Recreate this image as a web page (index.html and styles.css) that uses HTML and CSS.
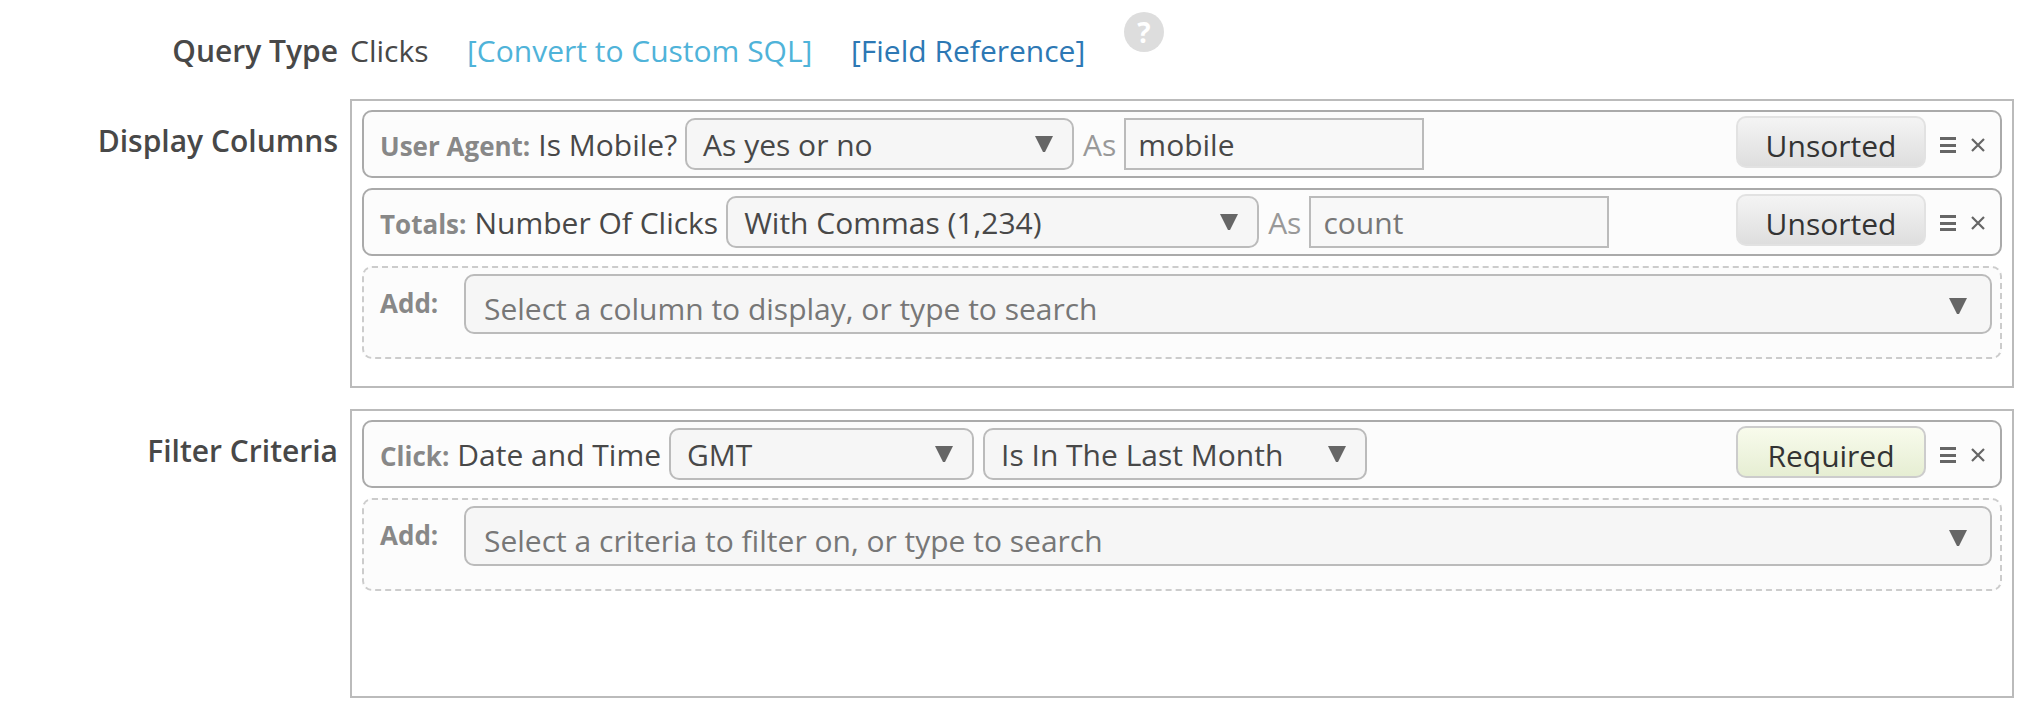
FILE: index.html
```html
<!DOCTYPE html>
<html lang="en">
<head>
<meta charset="utf-8">
<title>Query</title>
<link rel="stylesheet" href="styles.css">
</head>
<body>
<form class="form">
  <div class="field field-type">
    <div class="label">Query Type</div>
    <div class="type-line">
      <span class="type-value">Clicks</span>
      <a class="link link-sql" href="#">[Convert to Custom SQL]</a>
      <a class="link link-ref" href="#">[Field Reference]</a>
      <span class="help">?</span>
    </div>
  </div>
  <div class="field field-panel">
    <div class="label label-panel">Display Columns</div>
    <div class="panel">
      <div class="row">
        <span class="group">User Agent:</span>
        <span class="name">Is Mobile?</span>
        <span class="select select-format-a"><span class="select-text">As yes or no</span><svg class="arrow" viewBox="0 0 18 18"><path d="M0 1h18L10 17H8z"/></svg></span>
        <span class="as">As</span>
        <input class="alias" value="mobile">
        <span class="spacer"></span>
        <button class="sort" type="button">Unsorted</button>
        <svg class="icon-menu" viewBox="0 0 16 16"><path d="M0 0h16v3H0zM0 7h16v3H0zM0 13h16v3H0z"/></svg>
        <svg class="icon-close" viewBox="0 0 14 14"><path d="M1 1l12 12M13 1L1 13"/></svg>
      </div>
      <div class="row">
        <span class="group">Totals:</span>
        <span class="name">Number Of Clicks</span>
        <span class="select select-format-b"><span class="select-text">With Commas (1,234)</span><svg class="arrow" viewBox="0 0 18 18"><path d="M0 1h18L10 17H8z"/></svg></span>
        <span class="as">As</span>
        <input class="alias" placeholder="count">
        <span class="spacer"></span>
        <button class="sort" type="button">Unsorted</button>
        <svg class="icon-menu" viewBox="0 0 16 16"><path d="M0 0h16v3H0zM0 7h16v3H0zM0 13h16v3H0z"/></svg>
        <svg class="icon-close" viewBox="0 0 14 14"><path d="M1 1l12 12M13 1L1 13"/></svg>
      </div>
      <div class="add">
        <span class="add-label">Add:</span>
        <span class="select select-add"><span class="select-text placeholder">Select a column to display, or type to search</span><svg class="arrow" viewBox="0 0 18 18"><path d="M0 1h18L10 17H8z"/></svg></span>
      </div>
    </div>
  </div>
  <div class="field field-panel">
    <div class="label label-panel">Filter Criteria</div>
    <div class="panel">
      <div class="row">
        <span class="group">Click:</span>
        <span class="name">Date and Time</span>
        <span class="select select-zone"><span class="select-text">GMT</span><svg class="arrow" viewBox="0 0 18 18"><path d="M0 1h18L10 17H8z"/></svg></span>
        <span class="select select-range"><span class="select-text">Is In The Last Month</span><svg class="arrow" viewBox="0 0 18 18"><path d="M0 1h18L10 17H8z"/></svg></span>
        <span class="spacer"></span>
        <button class="sort sort-required" type="button">Required</button>
        <svg class="icon-menu" viewBox="0 0 16 16"><path d="M0 0h16v3H0zM0 7h16v3H0zM0 13h16v3H0z"/></svg>
        <svg class="icon-close" viewBox="0 0 14 14"><path d="M1 1l12 12M13 1L1 13"/></svg>
      </div>
      <div class="add">
        <span class="add-label">Add:</span>
        <span class="select select-add"><span class="select-text placeholder">Select a criteria to filter on, or type to search</span><svg class="arrow" viewBox="0 0 18 18"><path d="M0 1h18L10 17H8z"/></svg></span>
      </div>
    </div>
  </div>
</form>
</body>
</html>
```
FILE: styles.css
```css
* { box-sizing: border-box; }
html, body { margin: 0; padding: 0; background: #fff; }
body {
  font-family: "Open Sans", sans-serif;
  font-size: 30px;
  color: #484848;
}
.form { padding: 0 14px 14px 0; }
.field {
  display: grid;
  grid-template-columns: 338px 1fr;
  column-gap: 12px;
}
.field-type { height: 99px; align-items: start; }
.field-panel { margin-bottom: 21px; }
.label {
  text-align: right;
  font-weight: 600;
  line-height: 40px;
  padding-top: 31px;
}
.label-panel { padding-top: 0; margin-top: 22px; }
.type-line {
  display: flex;
  align-items: flex-start;
  line-height: 40px;
  padding-top: 31px;
}
.type-value { width: 117px; }
.link { text-decoration: none; }
.link-sql { color: #4fb3d9; width: 384px; }
.link-ref { color: #2d78b4; width: 274px; }
.help {
  width: 40px;
  height: 40px;
  border-radius: 50%;
  background: #ddd;
  color: #fff;
  font-weight: 700;
  font-size: 28px;
  line-height: 40px;
  text-align: center;
  margin-top: -19px;
  margin-left: -1px;
}
.panel {
  border: 2px solid #bbb;
  padding: 9px 10px;
  height: 289px;
  background: #fff;
}
.row {
  display: flex;
  align-items: center;
  height: 68px;
  margin-bottom: 10px;
  padding: 0 15px 0 16px;
  border: 2px solid #aaa;
  border-radius: 10px;
  background: #fcfcfc;
}
.group {
  font-weight: 700;
  font-size: 26px;
  color: #888;
  margin-right: 8px;
  padding-top: 4px;
}
.name { margin-right: 8px; }
.select {
  display: flex;
  align-items: center;
  justify-content: space-between;
  height: 52px;
  padding: 0 19px 0 16px;
  border: 2px solid #bbb;
  border-radius: 10px;
  background: #f6f6f6;
  flex: none;
}
.select + .select { margin-left: 9px; }
.select-format-a { width: 389px; }
.select-format-b { width: 533px; }
.select-zone { width: 305px; }
.select-range { width: 384px; }
.select-add { height: 60px; flex: 1; padding: 0 23px 0 18px; }
.placeholder { color: #777; padding-top: 8px; }
.arrow { width: 18px; height: 18px; fill: #666; flex: none; }
.select-add .arrow { margin-top: 3px; }
.as { color: #999; margin: 0 8px 0 9px; }
.alias {
  width: 300px;
  height: 52px;
  padding: 0 12px;
  border: 2px solid #bbb;
  background: #f8f8f8;
  font: inherit;
  color: #484848;
  outline: none;
}
.alias::placeholder { color: #777; opacity: 1; }
.spacer { flex: 1; }
.sort {
  width: 190px;
  height: 52px;
  margin-bottom: 4px;
  padding: 6px 0 0;
  border: 2px solid #e2e2e2;
  border-radius: 10px;
  background: linear-gradient(#f4f4f4, #dedede);
  font: inherit;
  color: #333;
}
.sort-required {
  border-color: #ccc;
  background: linear-gradient(#f8fbec, #e6eed3);
}
.icon-menu { width: 16px; height: 16px; margin-left: 14px; margin-top: 2px; fill: #666; flex: none; }
.icon-close { width: 14px; height: 14px; margin-left: 15px; margin-top: 2px; stroke: #666; stroke-width: 2.2; fill: none; flex: none; }
.add {
  display: flex;
  align-items: flex-start;
  height: 93px;
  padding: 6px 8px 0 16px;
  border: 2px dashed #ccc;
  border-radius: 10px;
  background: #fcfcfc;
}
.add-label {
  width: 84px;
  flex: none;
  font-weight: 700;
  font-size: 26px;
  color: #888;
  line-height: 58px;
}
```
